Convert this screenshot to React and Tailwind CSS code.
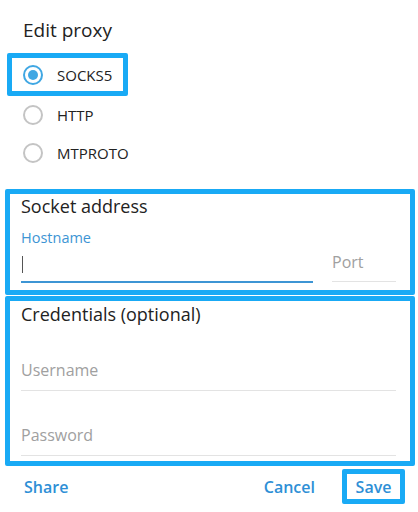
import React, { useState } from "react";

const HILITE = "border-[5px] border-[#19aaf5] rounded-[2px]";

function Radio({ checked }) {
  return (
    <span
      className={`flex items-center justify-center w-[20px] h-[20px] rounded-full border-2 ${
        checked ? "border-[#40a7e3]" : "border-[#c4c4c4]"
      }`}
    >
      {checked && <span className="w-[10px] h-[10px] rounded-full bg-[#40a7e3]" />}
    </span>
  );
}

function Field({ label }) {
  return (
    <div className="h-[65px] flex flex-col justify-end">
      <div className="text-[16px] leading-[22px] text-[#a0a0a0] mb-[9px]">{label}</div>
      <div className="h-px bg-[#e3e3e3]" />
    </div>
  );
}

export default function App() {
  const [type] = useState("SOCKS5");

  return (
    <div
      className="w-[418px] h-[512px] bg-white text-[#222]"
      style={{ fontFamily: '"Open Sans", sans-serif' }}
    >
      {/* Title */}
      <div className="pt-[19px] pl-[23px] text-[19px] leading-[22px]">Edit proxy</div>

      {/* Proxy type */}
      <div className={`mt-[12px] ml-[7px] w-[121px] h-[43px] ${HILITE} flex items-center pl-[11px] gap-[14px]`}>
        <Radio checked={type === "SOCKS5"} />
        <span className="text-[15px] leading-[20px]">SOCKS5</span>
      </div>
      {["HTTP", "MTPROTO"].map((t) => (
        <div key={t} className="h-[38px] flex items-center pl-[23px] gap-[14px]">
          <Radio checked={type === t} />
          <span className="text-[15px] leading-[20px]">{t}</span>
        </div>
      ))}

      {/* Socket address */}
      <div className={`mt-[17px] ml-[5px] w-[410px] h-[106px] ${HILITE} pl-[11px] pr-[14px]`}>
        <div className="pt-[1px] text-[18px] leading-[22px]">Socket address</div>
        <div className="mt-[11px] flex gap-[19px]">
          <div className="w-[292px]">
            <div className="text-[14.5px] leading-[20px] text-[#3d95d4]">Hostname</div>
            <div className="h-[33px] flex items-center pl-[1px]">
              <span className="w-px h-[17px] bg-[#555]" />
            </div>
            <div className="h-[2px] bg-[#3d95d4]" />
          </div>
          <div className="flex-1 flex flex-col justify-end">
            <div className="text-[16px] leading-[20px] text-[#a0a0a0] mb-[9px]">Port</div>
            <div className="h-px bg-[#e3e3e3] mb-px" />
          </div>
        </div>
      </div>

      {/* Credentials */}
      <div className={`mt-px ml-[5px] w-[410px] h-[170px] ${HILITE} pl-[11px] pr-[14px]`}>
        <div className="pt-[2px] text-[18px] leading-[22px]">Credentials (optional)</div>
        <div className="mt-[1px]">
          <Field label="Username" />
          <Field label="Password" />
        </div>
      </div>

      {/* Buttons */}
      <div className="flex items-center pl-[24px] pr-[13px] mt-[3px]">
        <button className="text-[16px] font-semibold text-[#2e8fd6]">Share</button>
        <button className="ml-auto mr-[27px] text-[16px] font-semibold text-[#2e8fd6]">Cancel</button>
        <div className={`w-[63px] h-[35px] ${HILITE} flex items-center justify-center`}>
          <button className="text-[16px] font-semibold text-[#2e8fd6]">Save</button>
        </div>
      </div>
    </div>
  );
}
